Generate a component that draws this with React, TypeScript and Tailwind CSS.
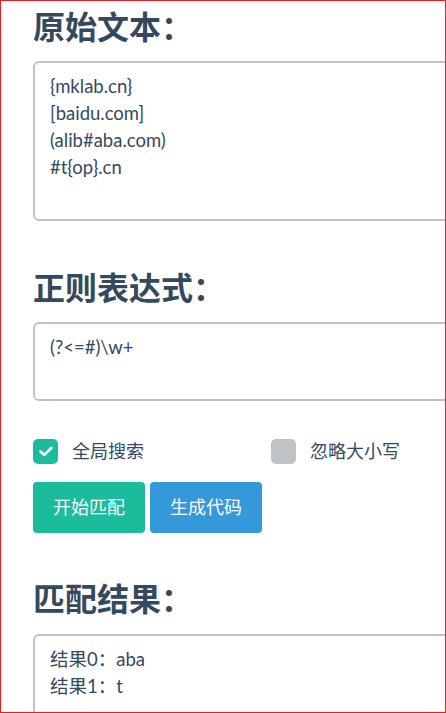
import { useState } from "react";

const font = "font-['Lato','Noto_Sans_CJK_SC',sans-serif]";

const Box = ({ lines, h }: { lines: string[]; h: string }) => (
  <div className={`w-[600px] ${h} border-2 border-[#bdc3c7] rounded-[6px] px-[15px] py-[10px] text-[18.5px] leading-[27px] text-[#34495e] bg-white`}>
    {lines.map((l, i) => (
      <div key={i}>{l}</div>
    ))}
  </div>
);

const Title = ({ text, mt }: { text: string; mt: string }) => (
  <h2 className={`${mt} text-[32px] leading-[35px] font-bold text-[#34495e] font-['Noto_Sans_CJK_SC',sans-serif]`}>
    {text}
  </h2>
);

const Check = ({ on }: { on: boolean }) => (
  <span className={`w-[25px] h-[25px] rounded-[5px] flex items-center justify-center ${on ? "bg-[#1abc9c]" : "bg-[#bdc3c7]"}`}>
    {on && (
      <svg width="14" height="11" viewBox="0 0 14 11" fill="none">
        <path d="M1.5 5.5 L5.2 9 L12.5 1.8" stroke="white" strokeWidth="2.6" strokeLinecap="round" strokeLinejoin="round" />
      </svg>
    )}
  </span>
);

const App = () => {
  const [global, setGlobal] = useState(true);
  const [ignore, setIgnore] = useState(false);

  return (
    <div className={`w-[446px] h-[713px] border border-[#ed1c24] overflow-hidden bg-white ${font}`}>
      <div className="pl-[32px] pt-[7px]">
        <Title text="原始文本：" mt="mt-0" />
        <div className="mt-[18px]">
          <Box lines={["{mklab.cn}", "[baidu.com]", "(alib#aba.com)", "#t{op}.cn"]} h="h-[160px]" />
        </div>

        <Title text="正则表达式：" mt="mt-[48px]" />
        <div className="mt-[18px]">
          <Box lines={["(?<=#)\\w+"]} h="h-[79px]" />
        </div>

        <div className="mt-[37px] flex items-center text-[18px] text-[#34495e]">
          <button onClick={() => setGlobal(!global)} className="w-[238px] flex items-center gap-[14px]">
            <Check on={global} />
            <span>全局搜索</span>
          </button>
          <button onClick={() => setIgnore(!ignore)} className="flex items-center gap-[14px]">
            <Check on={ignore} />
            <span>忽略大小写</span>
          </button>
        </div>

        <div className="mt-[17px] flex gap-[5px]">
          <button className="w-[112px] h-[51px] rounded-[4px] bg-[#1abc9c] text-white text-[18px]">开始匹配</button>
          <button className="w-[112px] h-[51px] rounded-[4px] bg-[#3498db] text-white text-[18px]">生成代码</button>
        </div>

        <Title text="匹配结果：" mt="mt-[47px]" />
        <div className="mt-[19px]">
          <Box lines={["结果0：aba", "结果1：t"]} h="h-[120px]" />
        </div>
      </div>
    </div>
  );
};

export default App;
